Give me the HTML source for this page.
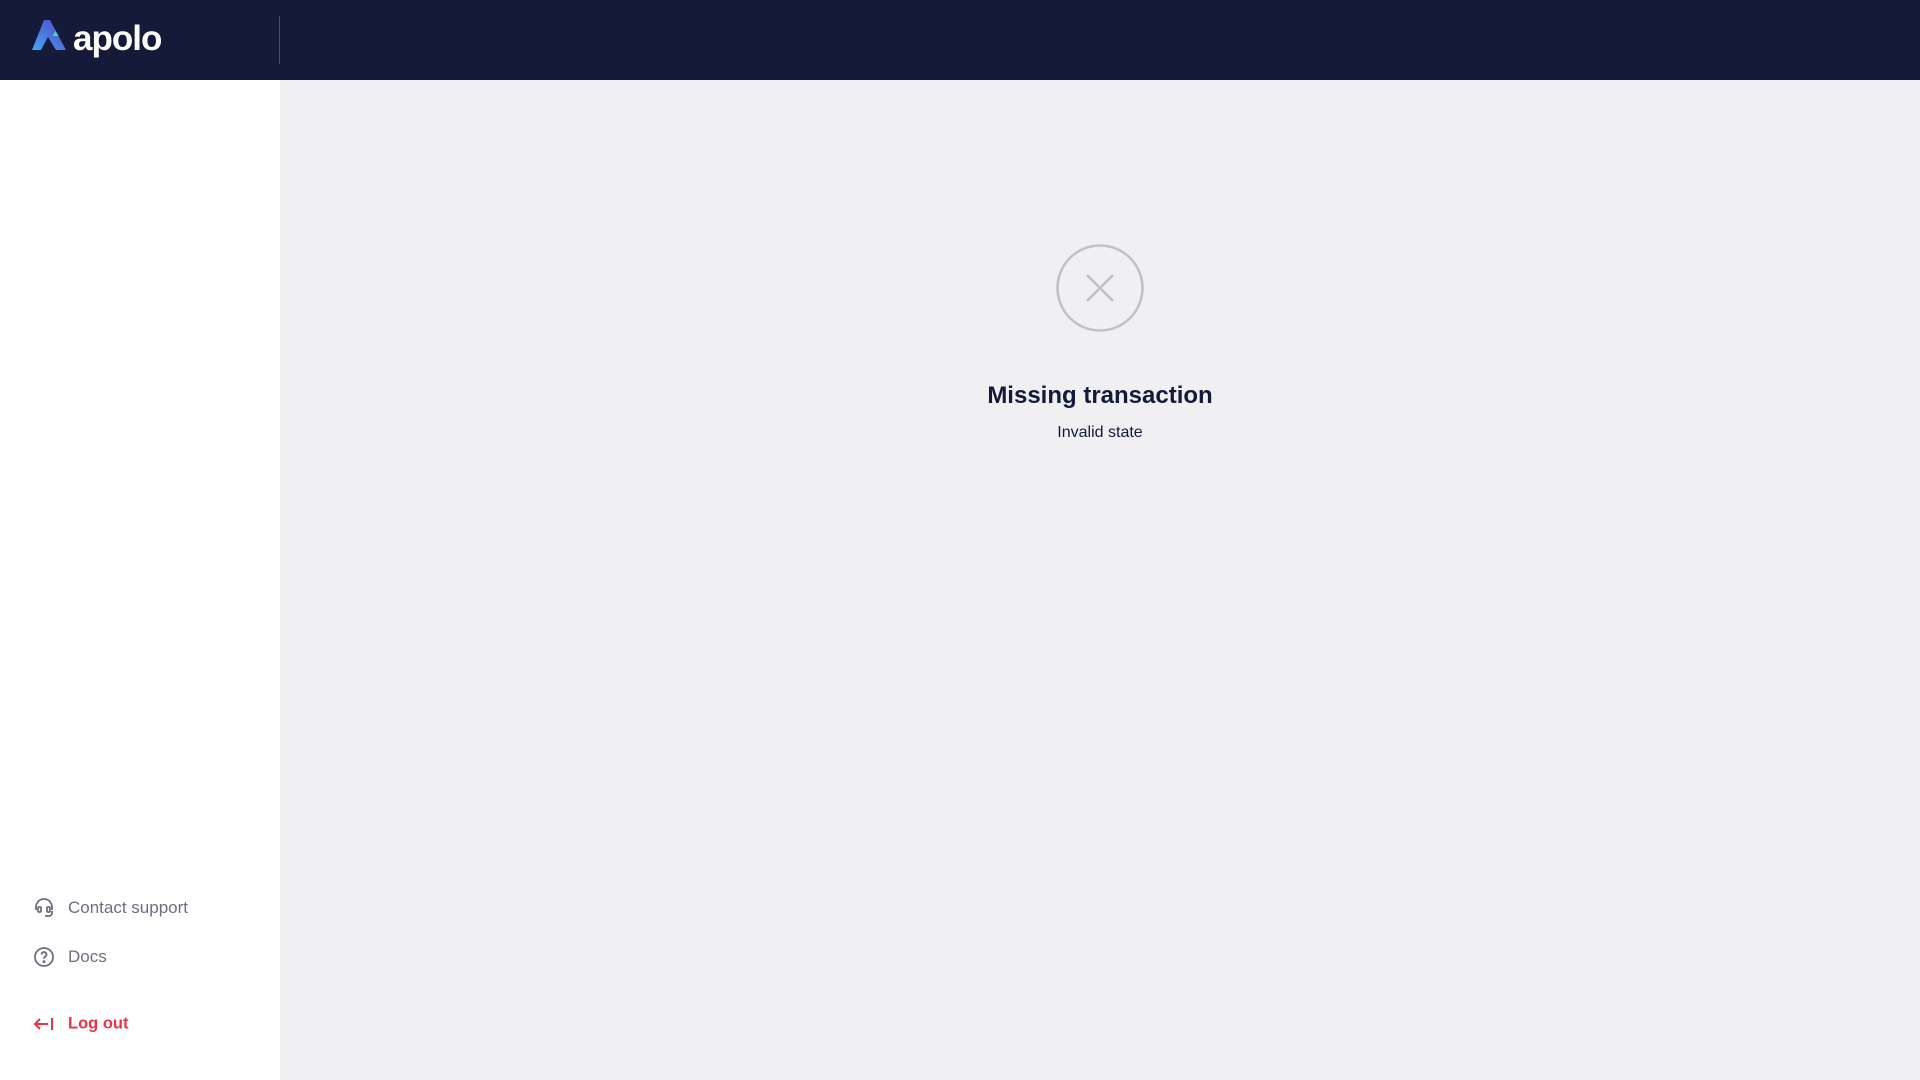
<!DOCTYPE html>
<html><head><style>
*{margin:0;padding:0;box-sizing:border-box}
body{width:1920px;height:1080px;overflow:hidden;font-family:"Liberation Sans",sans-serif;background:#f0f0f3;position:relative}
.hdr{position:absolute;left:0;top:0;width:1920px;height:80px;background:#141a38}
.div{position:absolute;left:279px;top:16px;width:1px;height:48px;background:#4a5070}
.side{position:absolute;left:0;top:80px;width:280px;height:1000px;background:#fff}
.logo{position:absolute;left:73px;top:19px;color:#fff;font-weight:bold;font-size:35px;letter-spacing:-1px}
.item{position:absolute;left:68px;font-size:17px;color:#6b6f80;transform:translateY(-50%)}
.ic{position:absolute;left:33px;transform:translateY(-50%)}
</style></head><body>
<div class="hdr">
<svg style="position:absolute;left:32px;top:20px" width="38" height="32" viewBox="0 0 38 32">
<defs><linearGradient id="g" x1="0" y1="1" x2="1" y2="0"><stop offset="0" stop-color="#3fa9f5"/><stop offset="1" stop-color="#5b3fc4"/></linearGradient></defs>
<path d="M12 0h6l16 30h-10l-8-13-7 13H0z" fill="url(#g)"/>
<path d="M23.5 11l-3 5h6z" fill="#2ee8a5"/>
</svg>
<div class="logo">apolo</div>
<div class="div"></div>
</div>
<div class="side"></div>
<svg class="ic" style="top:908px" width="22" height="22" viewBox="0 0 22 22" fill="none" stroke="#6b6f80" stroke-width="1.8"><path d="M3 13V10a8 8 0 0116 0v3"/><rect x="5" y="10" width="3" height="5" rx="1"/><rect x="14" y="10" width="3" height="5" rx="1"/><path d="M19 14v2a3 3 0 01-3 3h-4"/></svg>
<div class="item" style="top:908px">Contact support</div>
<svg class="ic" style="top:957px" width="22" height="22" viewBox="0 0 22 22" fill="none" stroke="#6b6f80" stroke-width="1.8"><circle cx="11" cy="11" r="9"/><path d="M8.5 8.5a2.5 2.5 0 114 2c-1 .7-1.5 1.2-1.5 2.3"/><circle cx="11" cy="15.8" r=".6" fill="#6b6f80"/></svg>
<div class="item" style="top:957px">Docs</div>
<svg class="ic" style="top:1024px" width="22" height="22" viewBox="0 0 22 22" fill="none" stroke="#e8334a" stroke-width="2"><path d="M2 11h13M7 6l-5 5 5 5M19 5v12"/></svg>
<div class="item" style="top:1024px;color:#e8334a;font-weight:bold;font-size:16.5px">Log out</div>
<svg style="position:absolute;left:1055px;top:243px" width="90" height="90" viewBox="0 0 90 90" fill="none" stroke="#c0c0c6" stroke-width="2.5"><circle cx="45" cy="45" r="42.5"/><path d="M32 32l26 26M58 32l-26 26"/></svg>
<div style="position:absolute;left:0;width:2200px;top:382px;text-align:center;font-size:24px;font-weight:bold;color:#141a38">Missing transaction</div>
<div style="position:absolute;left:0;width:2200px;top:424px;text-align:center;font-size:16px;color:#141a38">Invalid state</div>
</body></html>
